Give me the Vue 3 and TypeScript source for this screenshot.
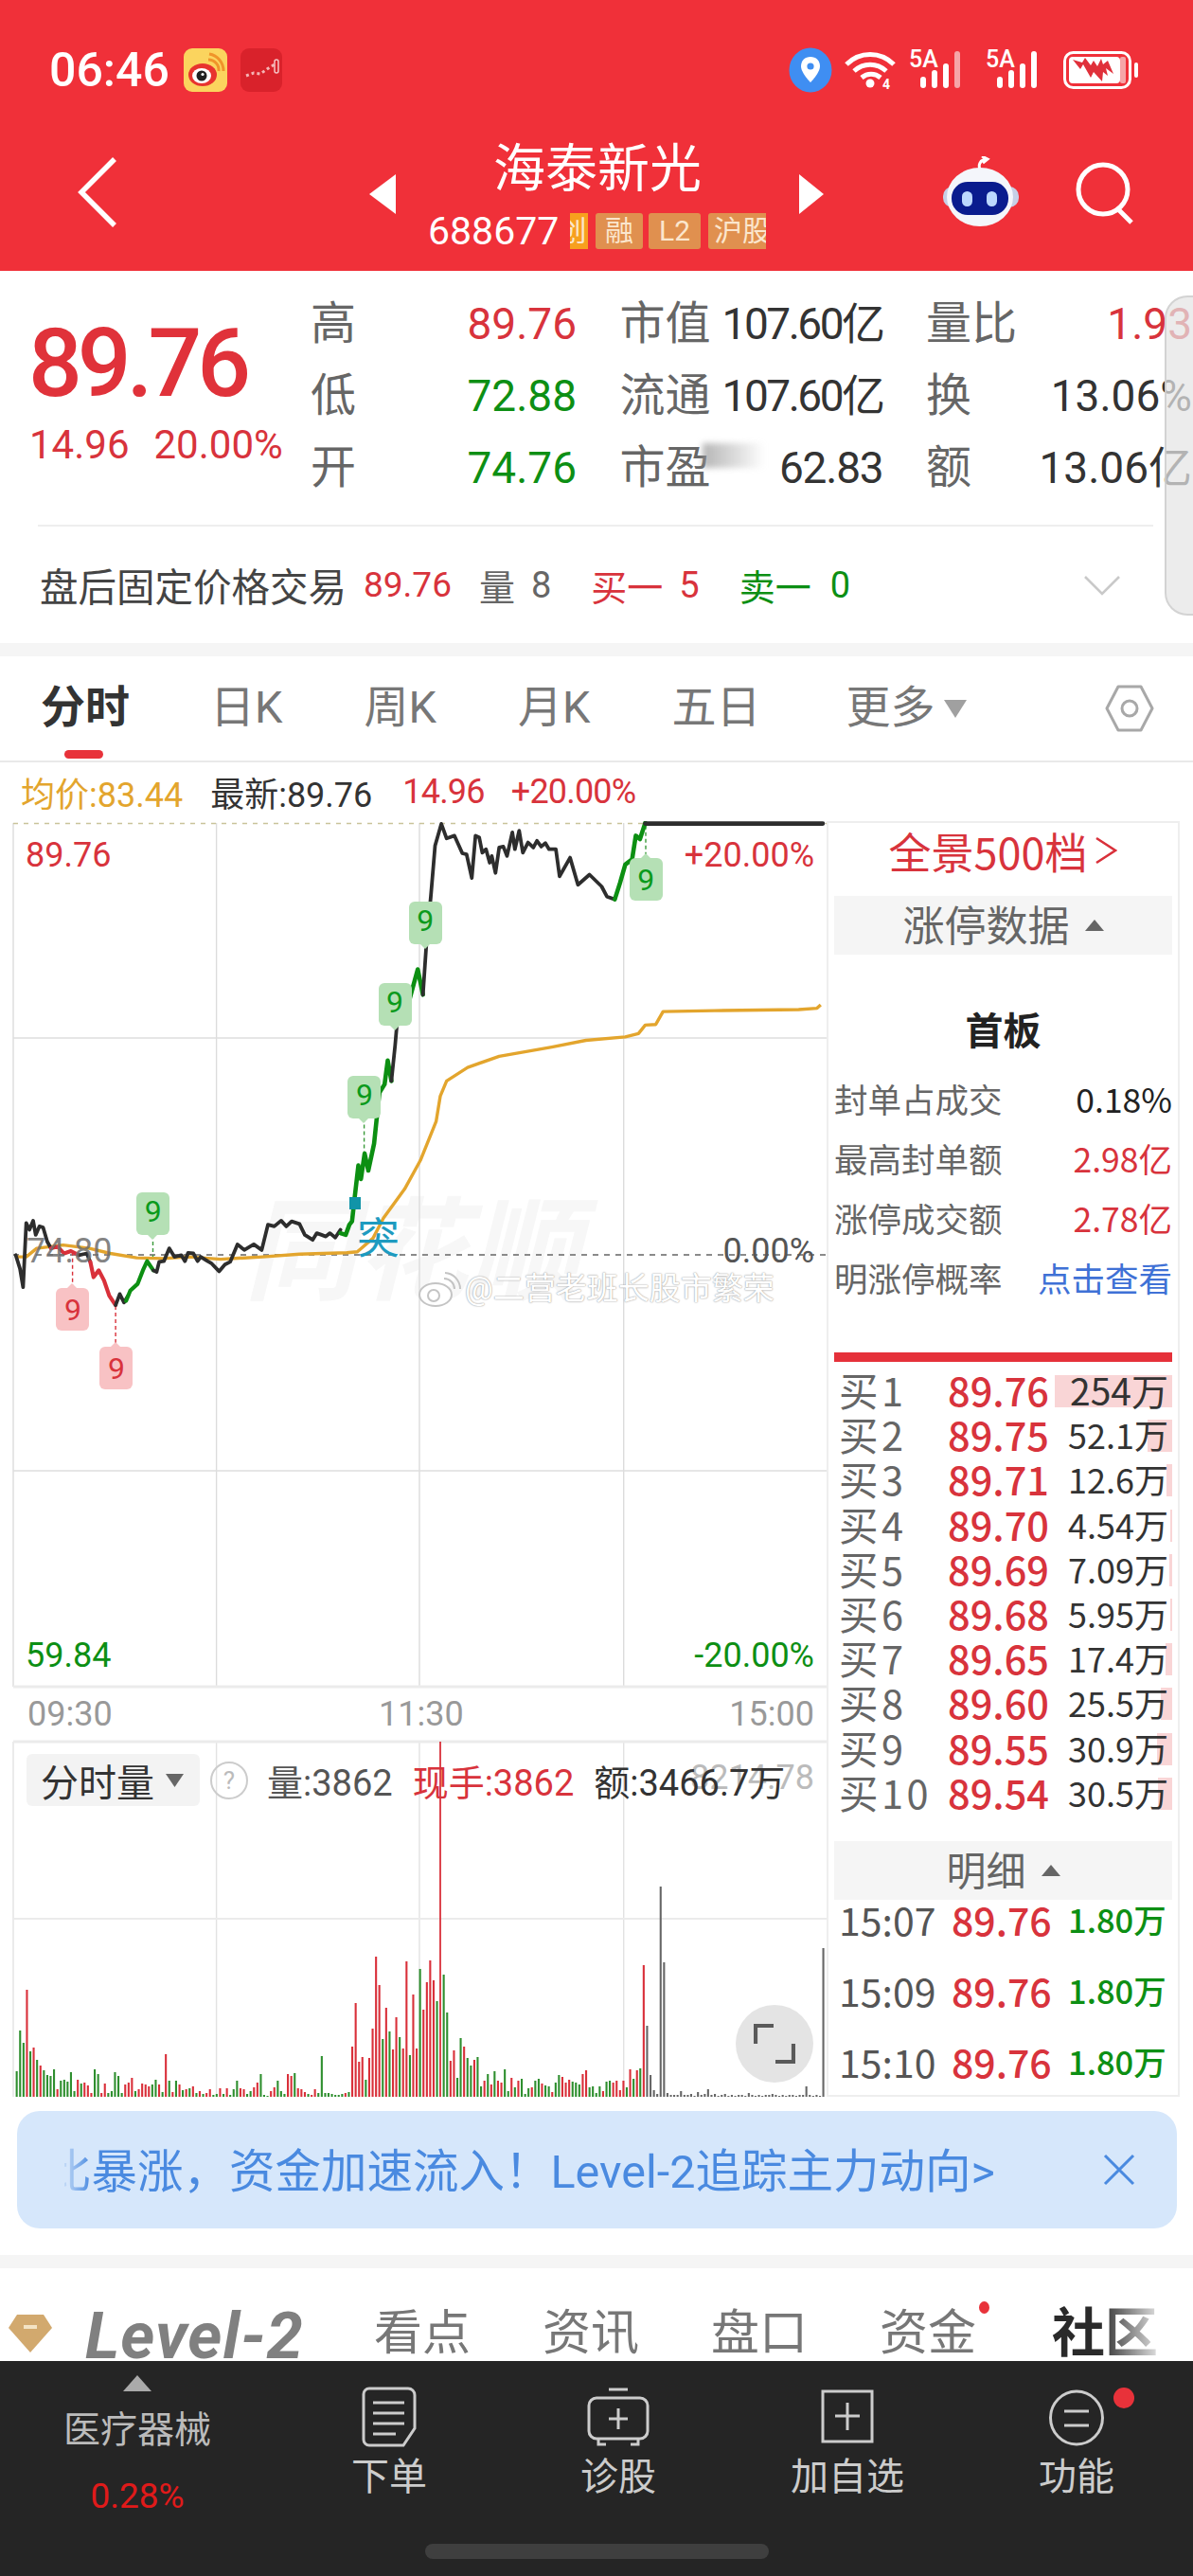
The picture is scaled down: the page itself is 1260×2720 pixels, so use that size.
<script setup lang="ts">
// points below were read off the reference at 1.802x / 2.8x, X and Y bring them back to px
const X = (z: number) => +(z / 1.802).toFixed(1)
const Y = (z: number) => +(z / 2.8 - 6).toFixed(1)

const toPoints = (raw: number[]) => {
  const out: string[] = []
  for (let i = 0; i < raw.length; i += 2) out.push(X(raw[i]) + ',' + Y(raw[i + 1]))
  return out.join(' ')
}

const BLACK = '#2d2d2d'
const GREEN = '#0c8f12'
const RED = '#d9303a'

const priceLines = [
  { c: BLACK, w: 3.8, p: [30,1300,38,1340,44,1395,50,1205,56,1225,63,1198,68,1240,75,1215,82,1218,90,1260,97,1280] },
  { c: RED, w: 4, p: [97,1280,110,1275,122,1295,135,1288,150,1300] },
  { c: BLACK, w: 3.8, p: [150,1300,165,1295,172,1320] },
  { c: RED, w: 4.2, p: [172,1320,178,1365,188,1345,198,1375,208,1420,220,1448] },
  { c: BLACK, w: 3.8, p: [220,1448,228,1415,236,1440,244,1420] },
  { c: GREEN, w: 4.2, p: [240,1435,248,1405,262,1385,272,1345,280,1318,292,1345] },
  { c: BLACK, w: 3.8, p: [292,1345,298,1350,303,1320,312,1318,322,1280,332,1305,345,1300,352,1318,358,1293,368,1295,376,1318,382,1305,395,1318,403,1325,417,1348,428,1328,438,1320,452,1268,465,1285,483,1268,498,1285,510,1210,522,1215,535,1198,545,1215,555,1200,570,1208,580,1240,595,1255,603,1235,612,1240,620,1245,628,1235,638,1248,648,1225] },
  { c: GREEN, w: 4.6, p: [648,1235,658,1240,665,1210,670,1200,675,1130,682,1035,687,1075,694,1000,701,1050,712,970,722,820,732,795,738,725,745,785] },
  { c: BLACK, w: 3.8, p: [745,785,752,680,757,590] },
  { c: GREEN, w: 4.6, p: [757,550,770,600,780,540,795,455,805,530] },
  { c: BLACK, w: 3.8, p: [805,530,812,370,820,240,828,90,840,25,850,68,865,60,880,112,888,115,898,185,905,60,912,65,918,110,925,100,932,140,936,120,943,170,950,95,958,92,965,120,975,50,980,100,988,45,995,110,1005,80,1015,95,1022,75,1030,92,1038,82,1045,100,1058,100,1065,180,1085,125,1100,205,1122,175,1145,210,1155,240,1170,248] },
  { c: GREEN, w: 4.6, p: [1170,248,1180,200,1190,145,1203,130,1210,60,1218,70,1228,22] },
  { c: BLACK, w: 4.6, p: [1228,24,1566,24] },
].map((l) => ({ ...l, pts: toPoints(l.p) }))

const avgLine = toPoints([30,1305,50,1305,70,1280,120,1270,170,1280,210,1295,260,1308,310,1310,360,1305,420,1312,500,1305,570,1297,660,1293,680,1290,710,1250,730,1190,770,1105,800,1020,830,905,838,830,850,785,890,745,950,712,1050,685,1115,665,1190,655,1215,645,1228,620,1248,618,1262,580,1360,577,1520,574,1555,570,1562,560])

// tag markers on the price line
const tags = [
  { x: 260, y: 1115, up: false, tone: 'g', d: [291, 1240, 291, 1310] },
  { x: 662, y: 770, up: false, tone: 'g', d: [693, 895, 693, 1000] },
  { x: 720, y: 495, up: false, tone: 'g', d: [751, 620, 751, 640] },
  { x: 778, y: 255, up: false, tone: 'g', d: [809, 380, 809, 460] },
  { x: 1198, y: 125, up: true, tone: 'g', d: [1229, 30, 1229, 125] },
  { x: 107, y: 1398, up: true, tone: 'r', d: [138, 1290, 138, 1398] },
  { x: 190, y: 1571, up: true, tone: 'r', d: [220, 1450, 220, 1571] },
].map((t) => ({ ...t, left: X(t.x) + 'px', top: Y(t.y) + 'px' }))

const volText =
  '27g 70g 57g 113r 48g 52r 39g 33r 28g 23g 22g 29g 8r 17g 18g 16g 26g 6g 18r 14g 15r 12r 4r 29g 24g 4r 14r 4g 6g 26g 22g 4g 13r 15r 20r 6g 8r 14r 13r 11r 13g 18g 13r 5g 45r 17g 5r 17g 13r 7g 8r 9g 11r 4g 6r 3g 4r 8r 2g 3g 9r 3g 9r 2g 8g 17g 9r 8r 3g 6g 10r 15r 24g 2g 1g 6r 10r 17g 6g 3g 24r 22r 25g 9r 8r 5r 3g 2r 8r 4g 43g 4g 4g 3g 2g 2g 3g 4r 5g ' +
  '53r 99r 37r 42r 18g 41r 72r 148r 118r 61g 94r 69g 50r 84r 63g 51r 143r 44g 108r 51r 135g 92r 121r 144r 123r 101g 375r 129g 89g 38r 49r 20g 62g 53r 41g 33g 39r 42g 11g 17r 24g 13r 27g 17r 15r 29g 6g 20r 10g 17r 19g 3g 9g 10r 17g 19g 14r 12g 11g 5r 15g 23g 21r 15r 18r 16g 15g 13g 24r 28r 10g 11g 4g 11g 6r 16g 17g 15r 17r 7r 17r 10g 29r 19g 28r 30g 139r 75k 23k 7k 3k 222k 142k 4k 2k 2k 2k 6k 2k 2k 3k 1k 5k 2k 3k 8k 2k 3k 1k 2k 3k 1k 2k 1k 2k 2k 1k 4k 2k 1k 2k 1k 2k 2k 3k 2k 1k 2k 1k 2k 2k 1k 2k 2k 11k 2k 1k 2k 1k 157k'

const volColor: Record<string, string> = { r: '#d9303a', g: '#2f8f2f', k: '#666666' }
const VOL_BASE = 1347
const volBars = volText.split(' ').map((tok, i) => {
  const h = parseInt(tok)
  const x = +((30 + 6.45 * i) / 1.802).toFixed(1)
  return { x, y: VOL_BASE - h, h, c: volColor[tok[tok.length - 1]] }
})

const vGrid = [14, 228.6, 443, 658.7]
const hGrid = [229, 686]

const buys = [
  { n: 1, p: '89.76', v: '254万', bar: 124, big: true },
  { n: 2, p: '89.75', v: '52.1万', bar: 26 },
  { n: 3, p: '89.71', v: '12.6万', bar: 6 },
  { n: 4, p: '89.70', v: '4.54万', bar: 2 },
  { n: 5, p: '89.69', v: '7.09万', bar: 3 },
  { n: 6, p: '89.68', v: '5.95万', bar: 2 },
  { n: 7, p: '89.65', v: '17.4万', bar: 7 },
  { n: 8, p: '89.60', v: '25.5万', bar: 12 },
  { n: 9, p: '89.55', v: '30.9万', bar: 16 },
  { n: 10, p: '89.54', v: '30.5万', bar: 15 },
]
const trades = ['15:07', '15:09', '15:10']
const limitRows = [
  { k: '封单占成交', v: '0.18%', cls: '' },
  { k: '最高封单额', v: '2.98亿', cls: 'up' },
  { k: '涨停成交额', v: '2.78亿', cls: 'up' },
  { k: '明涨停概率', v: '点击查看', cls: 'link' },
]
</script>

<template>
  <div class="page">
    <header class="head">
      <div class="status">
        <span class="clock">06:46</span>
        <svg class="app" width="46" height="46" viewBox="0 0 46 46">
          <rect width="46" height="46" rx="9" fill="#fbd45e" />
          <ellipse cx="20" cy="28" rx="15" ry="12" fill="#e8332e" />
          <ellipse cx="19" cy="29" rx="10" ry="8" fill="#fff" />
          <circle cx="19" cy="29" r="5.5" fill="#222" />
          <circle cx="20" cy="27.5" r="1.6" fill="#fff" />
          <path d="M26 12a11 11 0 0 1 11 12M27 6a18 18 0 0 1 15 18" fill="none" stroke="#f0942a" stroke-width="3" />
        </svg>
        <svg class="app" width="44" height="46" viewBox="0 0 44 46">
          <rect width="44" height="46" rx="9" fill="#d9222b" />
          <path d="M6 29l8-3 7 1 7-5 8-5" fill="none" stroke="#f5b5b5" stroke-width="3" stroke-dasharray="3 3" />
          <rect x="36" y="12" width="4" height="14" rx="2" fill="none" stroke="#f5c5c5" stroke-width="1.5" />
        </svg>
        <span class="grow"></span>
        <svg width="46" height="48" viewBox="0 0 46 48" class="ic-loc">
          <ellipse cx="23" cy="24" rx="22.5" ry="23.5" fill="#3f8ef2" />
          <path d="M23 10c-6 0-10 4-10 10 0 7 10 17 10 17s10-10 10-17c0-6-4-10-10-10z" fill="#fff" />
          <circle cx="23" cy="20" r="3.6" fill="#3f8ef2" />
        </svg>
        <svg width="56" height="42" viewBox="0 0 56 42" class="ic-wifi">
          <path d="M2 15C16 1 38 1 52 15M10 22c10-9 24-9 34 0M18 29c6-5 14-5 20 0" fill="none" stroke="#fff" stroke-width="5" />
          <circle cx="27" cy="35" r="4.5" fill="#fff" />
          <text x="40" y="41" class="tiny4">4</text>
        </svg>
        <div class="sig">
          <span class="fiveA">5A</span>
          <svg width="66" height="40" viewBox="0 0 66 40">
            <rect x="11" y="27" width="6" height="12" rx="3" fill="#fff" />
            <rect x="23" y="20" width="6" height="19" rx="3" fill="#fff" />
            <rect x="35" y="13" width="6" height="26" rx="3" fill="#fff" />
            <rect x="47" y="0" width="6" height="39" rx="3" fill="#f6a5a8" />
          </svg>
        </div>
        <div class="sig sig2">
          <span class="fiveA">5A</span>
          <svg width="66" height="40" viewBox="0 0 66 40">
            <rect x="11" y="27" width="6" height="12" rx="3" fill="#fff" />
            <rect x="23" y="20" width="6" height="19" rx="3" fill="#fff" />
            <rect x="35" y="13" width="6" height="26" rx="3" fill="#fff" />
            <rect x="47" y="0" width="6" height="39" rx="3" fill="#fff" />
          </svg>
        </div>
        <svg width="80" height="40" viewBox="0 0 80 40" class="ic-bat">
          <rect x="1.5" y="1.5" width="69" height="37" rx="9" fill="none" stroke="#fff" stroke-width="3" />
          <rect x="6" y="6" width="54" height="28" rx="4" fill="#fff" />
          <rect x="60" y="6" width="6" height="28" rx="2" fill="#f6a5a8" />
          <path d="M10 9l8 10 3-5 8 14 3-6 9 10 1-10 5 4-2-8 8 6-6-14-5 4-2-6-4 8-4-6-3 5-6-8-3 5z" fill="#e0303a" />
          <rect x="75" y="12" width="4" height="16" rx="2" fill="#fff" />
        </svg>
      </div>
      <div class="nav">
        <svg class="back" width="44" height="76" viewBox="0 0 44 76">
          <path d="M40 3L5 38l35 35" fill="none" stroke="#fff" stroke-width="5.5" />
        </svg>
        <svg class="arrow-l" width="28" height="42" viewBox="0 0 28 42"><path d="M28 0v42L0 21z" fill="#fff" /></svg>
        <div class="title">
          <div class="name">海泰新光</div>
          <div class="code-row">
            <span class="code">688677</span>
            <span class="tag tag-clip">创</span>
            <span class="tag">融</span>
            <span class="tag">L2</span>
            <span class="tag tag-cut">沪股通</span>
          </div>
        </div>
        <svg class="arrow-r" width="26" height="42" viewBox="0 0 26 42"><path d="M0 0v42l26-21z" fill="#fff" /></svg>
        <svg class="robot" width="82" height="74" viewBox="0 0 82 74">
          <path d="M40 14c-2-5 0-9 5-11M42 0l6 3-5 4" fill="none" stroke="#fff" stroke-width="3" />
          <rect x="1" y="32" width="80" height="22" rx="10" fill="#c6cfe6" />
          <ellipse cx="40" cy="43" rx="35" ry="31" fill="#f4f6fb" />
          <rect x="10" y="27" width="60" height="35" rx="17" fill="#0a1c8e" />
          <rect x="21" y="37" width="11" height="16" rx="5.5" fill="#bcd8ff" />
          <rect x="47" y="37" width="11" height="16" rx="5.5" fill="#bcd8ff" />
        </svg>
        <svg class="search" width="66" height="66" viewBox="0 0 66 66">
          <circle cx="30" cy="29" r="26" fill="none" stroke="#fff" stroke-width="5" />
          <path d="M46 50l14 14" stroke="#fff" stroke-width="5" />
        </svg>
      </div>
    </header>

    <section class="quote">
      <div class="quote-top">
        <div class="last">
          <div class="last-price">89.76</div>
          <div class="last-chg"><span>14.96</span><span>20.00%</span></div>
        </div>
        <div class="stats">
          <div class="cell"><span class="k">高</span><span class="up">89.76</span></div>
          <div class="cell"><span class="k">市值</span><span class="v tight">107.60亿</span></div>
          <div class="cell"><span class="k">量比</span><span class="up">1.93</span></div>
          <div class="cell"><span class="k">低</span><span class="down">72.88</span></div>
          <div class="cell"><span class="k">流通</span><span class="v tight">107.60亿</span></div>
          <div class="cell"><span class="k">换</span><span class="v">13.06%</span></div>
          <div class="cell"><span class="k">开</span><span class="down">74.76</span></div>
          <div class="cell"><span class="k">市盈</span><span class="v snug">62.83</span></div>
          <div class="cell"><span class="k">额</span><span class="v">13.06亿</span></div>
        </div>
      </div>
      <div class="rule"></div>
      <div class="after">
        <span class="after-name">盘后固定价格交易</span>
        <span class="up a1">89.76</span>
        <span class="muted a2">量</span>
        <span class="muted a3">8</span>
        <span class="up a4">买一</span>
        <span class="up a3">5</span>
        <span class="down a5">卖一</span>
        <span class="down a3b">0</span>
        <svg class="chev" width="40" height="22" viewBox="0 0 40 22"><path d="M2 2l18 18L38 2" fill="none" stroke="#c9c9c9" stroke-width="2.6" /></svg>
      </div>
      <div class="drawer"></div>
      <div class="smear"></div>
    </section>

    <div class="band"></div>

    <nav class="tabs">
      <span class="tab on">分时<i class="tab-bar"></i></span>
      <span class="tab">日K</span>
      <span class="tab">周K</span>
      <span class="tab">月K</span>
      <span class="tab t5">五日</span>
      <span class="tab">更多</span>
      <svg class="more-tri" width="24" height="19" viewBox="0 0 24 19"><path d="M0 0h24L12 19z" fill="#a0a0a0" /></svg>
      <svg class="hex" width="52" height="50" viewBox="0 0 52 50">
        <path d="M14 2h24l12 23-12 23H14L2 25z" fill="none" stroke="#a8a8a8" stroke-width="3" stroke-linejoin="round" />
        <circle cx="26" cy="25" r="8" fill="none" stroke="#a8a8a8" stroke-width="3" />
      </svg>
    </nav>

    <div class="info">
      <span class="avg">均价:83.44</span>
      <span class="lst">最新:89.76</span>
      <span class="up i1">14.96</span>
      <span class="up i2">+20.00%</span>
    </div>

    <div class="market">
      <div class="charts">
        <div class="mark">同花顺</div>
        <svg class="plot" width="873" height="1347" viewBox="0 0 873 1347">
          <line v-for="x in vGrid" :key="'a' + x" :x1="x" y1="2" :x2="x" y2="914" stroke="#dcdcdc" stroke-width="1.4" />
          <line v-for="x in vGrid" :key="'b' + x" :x1="x" y1="972" :x2="x" y2="1347" stroke="#e2e2e2" stroke-width="1.4" />
          <line v-for="y in hGrid" :key="'h' + y" x1="14" :y1="y" x2="873" :y2="y" stroke="#dedede" stroke-width="1.4" />
          <line x1="14" y1="914" x2="873" y2="914" stroke="#ebebeb" stroke-width="3" />
          <line x1="14" y1="972" x2="873" y2="972" stroke="#ebebeb" stroke-width="3" />
          <line x1="14" y1="1159" x2="873" y2="1159" stroke="#ebebeb" stroke-width="2" />
          <line x1="14" y1="2.5" x2="873" y2="2.5" stroke="#c9c49a" stroke-width="1.6" stroke-dasharray="5 6" />
          <line x1="14" y1="458" x2="873" y2="458" stroke="#8a8a8a" stroke-width="1.8" stroke-dasharray="6 6" />
          <line
            v-for="t in tags"
            :key="'d' + t.x"
            :x1="X(t.d[0])"
            :y1="Y(t.d[1])"
            :x2="X(t.d[2])"
            :y2="Y(t.d[3])"
            :stroke="t.tone === 'g' ? '#3a9a3a' : '#d9303a'"
            stroke-width="1.4"
            stroke-dasharray="4 3"
          />
          <polyline :points="avgLine" fill="none" stroke="#e3a52d" stroke-width="3.4" stroke-linejoin="round" />
          <polyline
            v-for="(l, i) in priceLines"
            :key="i"
            :points="l.pts"
            fill="none"
            :stroke="l.c"
            :stroke-width="l.w"
            stroke-linejoin="round"
            stroke-linecap="round"
          />
          <rect v-for="(b, i) in volBars" :key="'v' + i" :x="b.x" :y="b.y" :width="b.h > 300 ? 1.8 : 2.1" :height="b.h" :fill="b.c" />
        </svg>

        <span class="lb red tl">89.76</span>
        <span class="lb red tr">+20.00%</span>
        <span class="lb ghost ml">74.80</span>
        <span class="lb zero mr">0.00%</span>
        <span class="lb grn bl">59.84</span>
        <span class="lb grn br">-20.00%</span>
        <span class="lb axis a-l">09:30</span>
        <span class="lb axis a-m">11:30</span>
        <span class="lb axis a-r">15:00</span>

        <div
          v-for="t in tags"
          :key="'t' + t.x"
          class="pin"
          :class="[t.tone === 'g' ? 'pin-g' : 'pin-r', t.up ? 'pin-up' : 'pin-down']"
          :style="{ left: t.left, top: t.top }"
        >9</div>

        <i class="tu-dot"></i>
        <span class="tu">突</span>

        <div class="wb">
          <svg width="46" height="38" viewBox="0 0 46 38">
            <ellipse cx="19" cy="25" rx="17" ry="12" fill="#fff" stroke="#c4c4c4" stroke-width="2" />
            <circle cx="17" cy="26" r="6" fill="none" stroke="#c4c4c4" stroke-width="2" />
            <path d="M28 8a11 11 0 0 1 11 11M29 2a17 17 0 0 1 16 17" fill="none" stroke="#c4c4c4" stroke-width="2" />
          </svg>
          <span>@二营老班长股市繁荣</span>
        </div>

        <div class="vol-head">
          <span class="vol-btn">分时量<svg width="19" height="14" viewBox="0 0 19 14"><path d="M0 0h19L9.5 14z" fill="#666" /></svg></span>
          <span class="q">?</span>
          <span class="vh v1">量:3862</span>
          <span class="vh v2">现手:3862</span>
          <span class="vh v3">额:3466.7万</span>
        </div>
        <span class="lb vol-ghost">8214.78</span>

        <div class="full">
          <svg width="44" height="42" viewBox="0 0 44 42">
            <path d="M21 2H2v19M23 40h19V21" fill="none" stroke="#5a5a5a" stroke-width="4.2" />
          </svg>
        </div>
      </div>

      <aside class="side">
        <div class="side-title">全景500档<svg width="24" height="30" viewBox="0 0 24 30"><path d="M2 2l20 13L2 28" fill="none" stroke="#d9303a" stroke-width="2.6" /></svg></div>
        <div class="fold">涨停数据<i class="up-tri"></i></div>
        <div class="board">首板</div>
        <div v-for="r in limitRows" :key="r.k" class="limit">
          <span class="lk">{{ r.k }}</span>
          <span :class="r.cls">{{ r.v }}</span>
        </div>
        <div class="redline"></div>
        <div v-for="b in buys" :key="b.n" class="buy">
          <i class="buy-bar" :style="{ width: b.bar + 'px' }"></i>
          <span class="buy-n">买{{ b.n }}</span>
          <span class="buy-p">{{ b.p }}</span>
          <span class="buy-v" :class="{ big: b.big }">{{ b.v }}</span>
        </div>
        <div class="fold fold2">明细<i class="up-tri"></i></div>
        <div class="trades">
          <div v-for="t in trades" :key="t" class="trade">
            <span class="tt">{{ t }}</span>
            <span class="tp">89.76</span>
            <span class="tv">1.80万</span>
          </div>
        </div>
      </aside>
    </div>

    <div class="banner">
      <div class="ticker">比暴涨，资金加速流入！Level-2追踪主力动向&gt;</div>
      <svg width="34" height="34" viewBox="0 0 34 34"><path d="M2 2l30 30M32 2L2 32" stroke="#4a8ae0" stroke-width="3" /></svg>
    </div>

    <div class="band band2"></div>

    <nav class="tabs2">
      <svg class="dia" width="48" height="42" viewBox="0 0 48 42">
        <path d="M10 1h28l9 14-23 26L1 15z" fill="#d2a96e" />
        <rect x="17" y="12" width="14" height="4" fill="#f3e3c4" />
      </svg>
      <span class="lv2">Level-2</span>
      <span class="t2 t2a">看点</span>
      <span class="t2">资讯</span>
      <span class="t2">盘口</span>
      <span class="t2 dot">资金</span>
      <span class="t2 strong">社区</span>
    </nav>

    <footer class="bar">
      <div class="sector">
        <svg width="30" height="17" viewBox="0 0 30 17"><path d="M15 0l15 17H0z" fill="#aaa" /></svg>
        <div class="s-name">医疗器械</div>
        <div class="s-pct">0.28%</div>
      </div>
      <div class="act">
        <svg width="58" height="64" viewBox="0 0 58 64">
          <path d="M8 2h41a7 7 0 0 1 7 7v35L44 62H8a6 6 0 0 1-6-6V8a6 6 0 0 1 6-6z" fill="none" stroke="#ccc" stroke-width="3" />
          <path d="M12 17h33M12 28h33M12 39h33M12 50h24" stroke="#ccc" stroke-width="3" />
        </svg>
        <span>下单</span>
      </div>
      <div class="act">
        <svg width="66" height="64" viewBox="0 0 66 64">
          <path d="M23 3h20" stroke="#ccc" stroke-width="3" />
          <rect x="2" y="12" width="62" height="43" rx="8" fill="none" stroke="#ccc" stroke-width="3" />
          <path d="M33 23v22M23 34h20" stroke="#ccc" stroke-width="3" />
          <path d="M12 55v6h8M54 55v6h-8" fill="none" stroke="#ccc" stroke-width="3" />
        </svg>
        <span>诊股</span>
      </div>
      <div class="act">
        <svg width="56" height="64" viewBox="0 0 56 64">
          <rect x="2" y="5" width="52" height="53" fill="none" stroke="#ccc" stroke-width="3" />
          <path d="M28 17v29M15 31h26" stroke="#ccc" stroke-width="3" />
        </svg>
        <span>加自选</span>
      </div>
      <div class="act act-dot">
        <svg width="60" height="64" viewBox="0 0 60 64">
          <ellipse cx="30" cy="33" rx="27.5" ry="28" fill="none" stroke="#ccc" stroke-width="3" />
          <path d="M17 26h26M17 41h26" stroke="#ccc" stroke-width="3" />
        </svg>
        <span>功能</span>
      </div>
      <i class="home"></i>
    </footer>
  </div>
</template>

<style>
html,
body {
  margin: 0;
  background: #fff;
}
</style>

<style scoped>
.page {
  width: 1260px;
  height: 2720px;
  overflow: hidden;
  background: #fff;
  font-family: Roboto, 'Noto Sans CJK SC', sans-serif;
  color: #333;
}
.grow {
  flex: 1;
}

/* top red */
.head {
  height: 286px;
  background: #f03039;
  color: #fff;
}
.status {
  display: flex;
  align-items: center;
  height: 46px;
  padding: 51px 57px 0 53px;
}
.clock {
  font-size: 50px;
  font-weight: 500;
  width: 142px;
  margin-left: -1px;
}
.app {
  margin-right: 14px;
}
.ic-loc {
  margin-right: 13px;
}
.ic-wifi {
  margin-right: 13px;
}
.tiny4 {
  font-size: 14px;
  fill: #fff;
  font-weight: 700;
}
.sig {
  position: relative;
  width: 66px;
  height: 40px;
}
.sig2 {
  margin: 0 15px;
}
.fiveA {
  position: absolute;
  left: -1px;
  top: -4px;
  font-size: 25px;
  line-height: 25px;
  font-weight: 500;
}
.nav {
  display: flex;
  height: 120px;
  margin-top: 60px;
  align-items: flex-start;
  position: relative;
}
.back {
  margin: 8px 0 0 81px;
}
.arrow-l {
  margin: 27px 0 0 265px;
}
.title {
  width: 426px;
  text-align: center;
}
.name {
  font-size: 55px;
  line-height: 62px;
  margin-top: -10px;
}
.code-row {
  display: flex;
  align-items: center;
  height: 38px;
  margin-top: 16px;
  padding-left: 34px;
}
.code {
  font-size: 41px;
  width: 150px;
  text-align: left;
  font-weight: 400;
}
.tag {
  background: #e0904f;
  color: #fbe6cd;
  font-size: 30px;
  line-height: 38px;
  height: 38px;
  border-radius: 3px;
  width: 50px;
  margin-right: 6px;
  text-align: center;
  overflow: hidden;
}
.tag:nth-of-type(4) {
  width: 55px;
  margin-right: 8px;
}
.tag-clip {
  background: #f7a01e;
  width: 19px;
  margin-right: 8px;
  border-radius: 0;
  text-indent: -14px;
}
.tag-cut {
  width: 61px;
  margin: 0;
  white-space: nowrap;
  text-align: left;
  padding-left: 6px;
  box-sizing: border-box;
  border-radius: 3px 0 0 3px;
}
.arrow-r {
  margin: 27px 0 0 0;
}
.robot {
  margin: 8px 0 0 125px;
}
.search {
  margin: 14px 0 0 58px;
}

/* quote */
.quote {
  position: relative;
  height: 393px;
}
.quote-top {
  display: flex;
  height: 268px;
}
.rule {
  height: 2px;
  margin: 0 42px 0 40px;
  background: #eeeeee;
}
.last {
  width: 328px;
  flex: none;
  padding-left: 30px;
  box-sizing: border-box;
}
.last-price {
  font-size: 100px;
  line-height: 100px;
  margin-top: 48px;
  color: #e0323a;
  font-weight: 500;
  letter-spacing: -5px;
}
.last-chg {
  display: flex;
  gap: 26px;
  font-size: 42px;
  line-height: 44px;
  margin-top: 14px;
  margin-left: 1px;
  color: #d8333c;
  white-space: nowrap;
}
.stats {
  display: grid;
  grid-template-columns: 281px 278px 281px;
  column-gap: 45.5px;
  grid-auto-rows: 76px;
  padding-top: 18px;
  font-size: 46px;
  flex: none;
  white-space: nowrap;
}
.cell {
  display: flex;
  justify-content: space-between;
  align-items: center;
  line-height: 76px;
}
.k {
  font-size: 48px;
  color: #666;
}
.v {
  color: #333;
}
.tight {
  letter-spacing: -2.5px;
}
.snug {
  letter-spacing: -1.2px;
}
.up {
  color: #d8333c;
}
.down {
  color: #0d8f14;
}
.muted {
  color: #666;
}
.link {
  color: #3f71d6;
}
.after {
  display: flex;
  align-items: center;
  height: 123px;
  padding-left: 42px;
  font-size: 38px;
  white-space: nowrap;
}
.after-name {
  font-size: 40.5px;
  color: #444;
  width: 342px;
}
.a1 {
  font-size: 37px;
}
.a2 {
  margin-left: 29px;
}
.a3 {
  margin-left: 17px;
}
.a3b {
  margin-left: 20px;
}
.a4 {
  margin-left: 42px;
}
.a5 {
  margin-left: 42px;
}
.chev {
  margin-left: 246px;
}
.drawer {
  position: absolute;
  left: 1230px;
  top: 26px;
  width: 34px;
  height: 338px;
  box-sizing: border-box;
  background: rgba(228, 228, 228, 0.72);
  border: 2px solid rgba(205, 205, 205, 0.8);
  border-radius: 24px 0 0 24px;
}
.smear {
  position: absolute;
  left: 742px;
  top: 182px;
  width: 66px;
  height: 26px;
  background: linear-gradient(90deg, rgba(150, 150, 150, 0.7), rgba(255, 255, 255, 0));
  filter: blur(3px);
}
.band {
  height: 14px;
  background: #f5f5f5;
}

/* tabs */
.tabs {
  display: flex;
  align-items: center;
  height: 110px;
  border-bottom: 2px solid #e9e9e9;
  padding-left: 43px;
  gap: 86px;
  box-sizing: content-box;
  position: relative;
}
.tab {
  font-size: 47px;
  color: #777;
  line-height: 110px;
  position: relative;
  margin-top: -2px;
}
.tab.on {
  color: #333;
  font-weight: 700;
  margin-right: -1px;
}
.t5 {
  margin-right: 4px;
}
.tab-bar {
  position: absolute;
  left: 25px;
  bottom: 1px;
  width: 41px;
  height: 9px;
  border-radius: 5px;
  background: #e8323a;
}
.more-tri {
  margin-left: -77px;
}
.hex {
  position: absolute;
  left: 1167px;
  top: 30px;
}
.info {
  display: flex;
  align-items: center;
  height: 62px;
  padding-left: 22px;
  font-size: 36px;
  white-space: nowrap;
}
.avg {
  color: #e3a52d;
}
.lst {
  margin-left: 29px;
  color: #333;
}
.i1 {
  margin-left: 32px;
  letter-spacing: -0.8px;
}
.i2 {
  margin-left: 28px;
  letter-spacing: -0.8px;
}

/* market */
.market {
  display: flex;
  height: 1347px;
}
.charts {
  position: relative;
  width: 873px;
  flex: none;
}
.plot {
  position: absolute;
  left: 0;
  top: 0;
}
.mark {
  position: absolute;
  left: 258px;
  top: 396px;
  font-size: 118px;
  line-height: 120px;
  font-weight: 700;
  font-style: italic;
  color: #f7f7f7;
  white-space: nowrap;
}
.lb {
  position: absolute;
  font-size: 36px;
  line-height: 36px;
  white-space: nowrap;
}
.red {
  color: #d8333c;
}
.grn {
  color: #0d8f14;
}
.tl {
  left: 27px;
  top: 18px;
}
.tr {
  right: 13px;
  top: 18px;
}
.ml {
  left: 28px;
  top: 436px;
}
.mr {
  right: 13px;
  top: 436px;
}
.bl {
  left: 27px;
  top: 863px;
}
.br {
  right: 13px;
  top: 863px;
}
.ghost {
  color: rgba(110, 110, 110, 0.85);
}
.zero {
  color: #555;
}
.axis {
  color: #999;
  top: 925px;
}
.a-l {
  left: 29px;
}
.a-m {
  left: 400px;
}
.a-r {
  right: 13px;
}
.pin {
  position: absolute;
  width: 35px;
  height: 45px;
  font-size: 32px;
  line-height: 41px;
  text-align: center;
  border-radius: 6px;
  box-sizing: border-box;
}
.pin::after {
  content: '';
  position: absolute;
  left: 11px;
  border-left: 6.5px solid transparent;
  border-right: 6.5px solid transparent;
}
.pin-g {
  background: #b5e0b5;
  color: #0b9a1c;
}
.pin-r {
  background: #f8c2c4;
  color: #d8333c;
}
.pin-down::after {
  bottom: -5px;
  border-top: 6px solid #b5e0b5;
}
.pin-up {
  padding-top: 3px;
}
.pin-up::after {
  top: -5px;
  border-bottom: 6px solid #b5e0b5;
}
.pin-r.pin-up::after {
  border-bottom-color: #f8c2c4;
}
.tu-dot {
  position: absolute;
  left: 369px;
  top: 397px;
  width: 12px;
  height: 13px;
  background: #1194a8;
}
.tu {
  position: absolute;
  left: 377px;
  top: 417px;
  font-size: 45px;
  line-height: 50px;
  color: #1e9bc0;
}
.wb {
  position: absolute;
  left: 441px;
  top: 474px;
  display: flex;
  align-items: center;
  gap: 4px;
  font-size: 33px;
  line-height: 40px;
  color: #fff;
  white-space: nowrap;
  text-shadow: 0 0 1px #9a9a9a, 0 0 2px #aaa;
}
.vol-head {
  position: absolute;
  left: 28px;
  top: 985px;
  height: 55px;
  display: flex;
  align-items: center;
  font-size: 38px;
  white-space: nowrap;
  z-index: 1;
}
.vol-btn {
  display: flex;
  align-items: center;
  width: 183px;
  height: 55px;
  box-sizing: border-box;
  padding-left: 15px;
  gap: 12px;
  background: #f3f3f3;
  border-radius: 6px;
  color: #333;
  font-size: 40px;
}
.q {
  width: 36px;
  height: 36px;
  margin-left: 11px;
  border: 2px solid #ccc;
  border-radius: 50%;
  color: #bbb;
  font-size: 26px;
  line-height: 36px;
  text-align: center;
}
.vh {
  flex: none;
}
.v1 {
  margin-left: 20px;
  color: #555;
}
.v2 {
  margin-left: 21px;
  color: #d8333c;
}
.v3 {
  margin-left: 21px;
  color: #333;
}
.vol-ghost {
  right: 13px;
  top: 992px;
  color: #bbb;
}
.full {
  position: absolute;
  left: 777px;
  top: 1250px;
  width: 82px;
  height: 82px;
  border-radius: 50%;
  background: rgba(226, 226, 226, 0.92);
  display: flex;
  align-items: center;
  justify-content: center;
}

/* right panel */
.side {
  width: 373px;
  flex: none;
  box-sizing: border-box;
  border: 2px solid #eeeeee;
  padding: 0 6px;
  font-family: 'Noto Sans CJK SC', sans-serif;
}
.side-title {
  display: flex;
  align-items: center;
  justify-content: center;
  gap: 8px;
  height: 77px;
  padding-bottom: 19px;
  box-sizing: border-box;
  font-size: 45px;
  color: #d8333c;
}
.fold {
  display: flex;
  align-items: center;
  justify-content: center;
  height: 62px;
  padding-bottom: 4px;
  box-sizing: border-box;
  background: #f5f5f5;
  font-size: 44px;
  color: #666;
  gap: 16px;
}
.fold2 {
  margin-top: 27px;
  font-size: 42px;
}
.up-tri {
  width: 0;
  height: 0;
  margin-top: 4px;
  border-left: 10px solid transparent;
  border-right: 10px solid transparent;
  border-bottom: 12px solid #666;
}
.board {
  margin-top: 58px;
  margin-bottom: 2px;
  font-size: 40px;
  line-height: 40px;
  font-weight: 700;
  color: #222;
  text-align: center;
}
.limit {
  display: flex;
  justify-content: space-between;
  align-items: center;
  height: 63px;
  padding-bottom: 5px;
  box-sizing: border-box;
  font-size: 35.5px;
  color: #222;
}
.board + .limit {
  margin-top: 24px;
}
.lk {
  color: #666;
}
.redline {
  height: 10px;
  margin-top: 46px;
  margin-bottom: 7px;
  background: #e5313a;
}
.buy {
  position: relative;
  display: flex;
  align-items: center;
  height: 47.2px;
  padding-bottom: 3px;
  box-sizing: border-box;
  font-size: 41.5px;
  white-space: nowrap;
}
.buy-bar {
  position: absolute;
  right: 0;
  top: 7px;
  height: 34px;
  background: #f9d5d6;
}
.buy-n {
  position: relative;
  width: 120px;
  padding-left: 5px;
  color: #666;
  box-sizing: border-box;
  letter-spacing: 3.5px;
}
.buy-p {
  position: relative;
  color: #d8333c;
  width: 110px;
  font-weight: 500;
}
.buy-v {
  position: relative;
  flex: 1;
  text-align: right;
  padding-right: 4px;
  font-size: 36px;
  color: #333;
}
.buy-v.big {
  font-size: 39px;
}
.trades {
  display: flex;
  flex-direction: column;
  gap: 29px;
}
.trade {
  display: flex;
  align-items: center;
  height: 46px;
  padding-bottom: 5px;
  box-sizing: border-box;
  white-space: nowrap;
  font-size: 41px;
}
.tt {
  padding-left: 5px;
  width: 124px;
  box-sizing: border-box;
  color: #555;
}
.tp {
  width: 123px;
  color: #d8333c;
  font-weight: 500;
}
.tv {
  font-size: 34.5px;
  color: #0d8f14;
  font-weight: 500;
}

/* banner */
.banner {
  display: flex;
  align-items: center;
  justify-content: space-between;
  box-sizing: border-box;
  width: 1225px;
  height: 124px;
  margin: 15px 0 28px 18px;
  padding: 0 44px 0 50px;
  border-radius: 24px;
  background: #d6e7fb;
  color: #4a8ae0;
}
.ticker {
  font-size: 48.5px;
  white-space: nowrap;
  margin-top: -4px;
  text-indent: -20px;
  -webkit-mask-image: linear-gradient(90deg, rgba(0, 0, 0, 0.15), #000 28px);
  mask-image: linear-gradient(90deg, rgba(0, 0, 0, 0.15), #000 28px);
  width: 1000px;
  overflow: hidden;
}
.band2 {
  height: 14px;
}
.tabs2 {
  position: relative;
  display: flex;
  align-items: center;
  height: 98px;
  overflow: hidden;
  gap: 76px;
  padding-top: 40px;
  box-sizing: border-box;
}
.dia {
  position: absolute;
  left: 8px;
  top: 48px;
}
.lv2 {
  position: absolute;
  left: 90px;
  top: 34px;
  font-size: 69px;
  line-height: 76px;
  font-weight: 700;
  font-style: italic;
  letter-spacing: 1px;
  color: #808080;
}
.t2 {
  font-size: 51px;
  line-height: 60px;
  color: #777;
  position: relative;
  flex: none;
}
.t2a {
  margin-left: 395px;
}
.dot::after {
  content: '';
  position: absolute;
  right: -14px;
  top: -4px;
  width: 11px;
  height: 13px;
  border-radius: 50%;
  background: #e8323a;
}
.strong {
  font-size: 56px;
  font-weight: 700;
  color: #2a2a2a;
  margin-left: 4px;
  -webkit-mask-image: linear-gradient(90deg, #000 50px, rgba(0, 0, 0, 0.15));
  mask-image: linear-gradient(90deg, #000 50px, rgba(0, 0, 0, 0.15));
}

/* bottom */
.bar {
  position: relative;
  display: grid;
  grid-template-columns: 290px repeat(4, 242px);
  height: 228px;
  background: #252525;
  color: #ccc;
}
.sector {
  display: flex;
  flex-direction: column;
  align-items: center;
  padding-top: 15px;
}
.s-name {
  font-size: 39px;
  line-height: 38px;
  margin-top: 22px;
  color: #bbb;
}
.s-pct {
  font-size: 37px;
  line-height: 36px;
  margin-top: 33px;
  color: #e01a1a;
}
.act {
  display: flex;
  flex-direction: column;
  align-items: center;
  padding-top: 27px;
  font-size: 40px;
  line-height: 40px;
  position: relative;
}
.act svg {
  margin-bottom: 12px;
}
.act-dot::after {
  content: '';
  position: absolute;
  left: 160px;
  top: 28px;
  width: 22px;
  height: 22px;
  border-radius: 50%;
  background: #e8323a;
}
.home {
  position: absolute;
  left: 449px;
  top: 193px;
  width: 363px;
  height: 16px;
  border-radius: 8px;
  background: #3f3f3f;
}
</style>
